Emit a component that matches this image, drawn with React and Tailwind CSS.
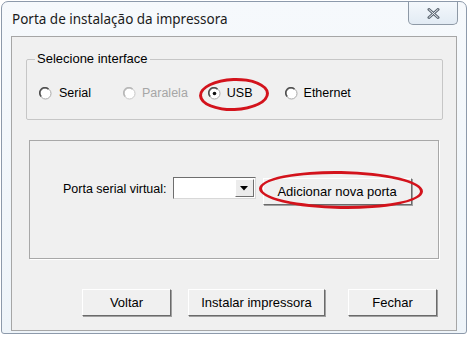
import React from "react";

const Radio = ({ checked, disabled }) => (
  <svg width="13" height="13" viewBox="0 0 13 13" className="shrink-0">
    <circle cx="6.5" cy="6.5" r="5.5" fill="#fff" stroke={disabled ? "#c8c8c8" : "#a8a8a8"} />
    <path d="M2.2 9.5 A5 5 0 0 1 9.5 2.2" fill="none" stroke={disabled ? "#b8b8b8" : "#505050"} strokeWidth="1.6" />
    {checked && <circle cx="6.5" cy="6.5" r="1.8" fill="#111" />}
  </svg>
);

const WinButton = ({ children, className = "" }) => (
  <button
    className={
      "h-[27px] bg-[#f0f0f0] border border-t-white border-l-white border-r-[#6a6a6a] border-b-[#6a6a6a] shadow-[1px_1px_0_#a0a0a0] text-[13px] text-black " +
      className
    }
  >
    {children}
  </button>
);

export default function App() {
  return (
    <div className="relative w-[471px] h-[340px] bg-white overflow-hidden font-['Liberation_Sans',Arial,sans-serif]">
      <div className="ml-[1px] mt-[1px] w-[466px] h-[333px] border border-[#8d9aab] rounded-t-[7px] rounded-b-[3px] bg-gradient-to-b from-[#f6f9fc] to-[#eef4f9] flex flex-col">
        {/* title bar */}
        <div className="h-[34px] flex justify-between">
          <div className="pl-[10px] pt-[7px] text-[13.5px] text-[#1b1b1b] font-['Noto_Sans',sans-serif]">
            Porta de instalação da impressora
          </div>
          <div className="mr-[8px] w-[50px] h-[23px] border border-t-0 border-[#8e99a6] rounded-b-[5px] bg-gradient-to-b from-[#f4f8fc] to-[#e2ebf4] flex items-center justify-center">
            <svg width="13" height="11" viewBox="0 0 13 11">
              <path d="M2 1.5 L11 9.5 M11 1.5 L2 9.5" stroke="#5a6470" strokeWidth="3" strokeLinecap="round" />
              <path d="M2 1.5 L11 9.5 M11 1.5 L2 9.5" stroke="#eef2f6" strokeWidth="1" strokeLinecap="round" />
            </svg>
          </div>
        </div>

        {/* client area */}
        <div className="mx-[9px] h-[295px] border border-[#a6a6a6] bg-[#f0f0f0] flex flex-col">
          <fieldset className="mt-[14px] ml-[14px] w-[417px] h-[69px] border border-[#c6c6c6] rounded-[2px] px-[12px]">
            <legend className="ml-[-4px] px-[2px] text-[13px] text-black leading-[16px]">
              Selecione interface
            </legend>
            <div className="flex items-center h-[42px] pt-[10px] text-[12.5px]">
              <label className="flex items-center gap-[7px] text-black">
                <Radio />
                Serial
              </label>
              <label className="ml-[32px] flex items-center gap-[6px] text-[#a6a6a6]">
                <Radio disabled />
                Paralela
              </label>
              <label className="ml-[20px] flex items-center gap-[6px] text-black">
                <Radio checked />
                USB
              </label>
              <label className="ml-[32px] flex items-center gap-[6px] text-black">
                <Radio />
                Ethernet
              </label>
            </div>
          </fieldset>

          <div className="mt-[20px] ml-[17px] w-[410px] h-[119px] border border-[#a8a8a8] shadow-[1px_1px_0_#ffffff] flex items-start pt-[36px] pl-[33px] text-[12.5px]">
            <span className="mt-[3px] text-black">Porta serial virtual:</span>
            <div className="ml-[6px] w-[83px] h-[22px] bg-white border border-t-[#6e6e6e] border-l-[#6e6e6e] border-r-[#d8d8d8] border-b-[#d8d8d8] flex justify-end p-[1px]">
              <div className="w-[19px] h-full bg-[#ececec] border border-t-white border-l-white border-r-[#707070] border-b-[#707070] flex items-center justify-center">
                <svg width="8" height="5" viewBox="0 0 8 5">
                  <path d="M0 0 H8 L4 4.5 Z" fill="#000" />
                </svg>
              </div>
            </div>
            <WinButton className="ml-[7px] mt-[1px] w-[149px] h-[24px]">Adicionar nova porta</WinButton>
          </div>

          <div className="mt-[30px] flex pl-[70px] gap-[17px]">
            <WinButton className="w-[89px]">Voltar</WinButton>
            <WinButton className="w-[137px]">Instalar impressora</WinButton>
            <WinButton className="ml-[6px] w-[89px]">Fechar</WinButton>
          </div>
        </div>
      </div>

      {/* red highlight marks */}
      <div className="absolute left-[199px] top-[78px] w-[70px] h-[33px] rounded-[50%] border-[3px] border-[#d3131c] -rotate-2"></div>
      <div className="absolute left-[259px] top-[171px] w-[164px] h-[38px] rounded-[50%] border-[3px] border-[#d3131c] rotate-1"></div>
    </div>
  );
}
